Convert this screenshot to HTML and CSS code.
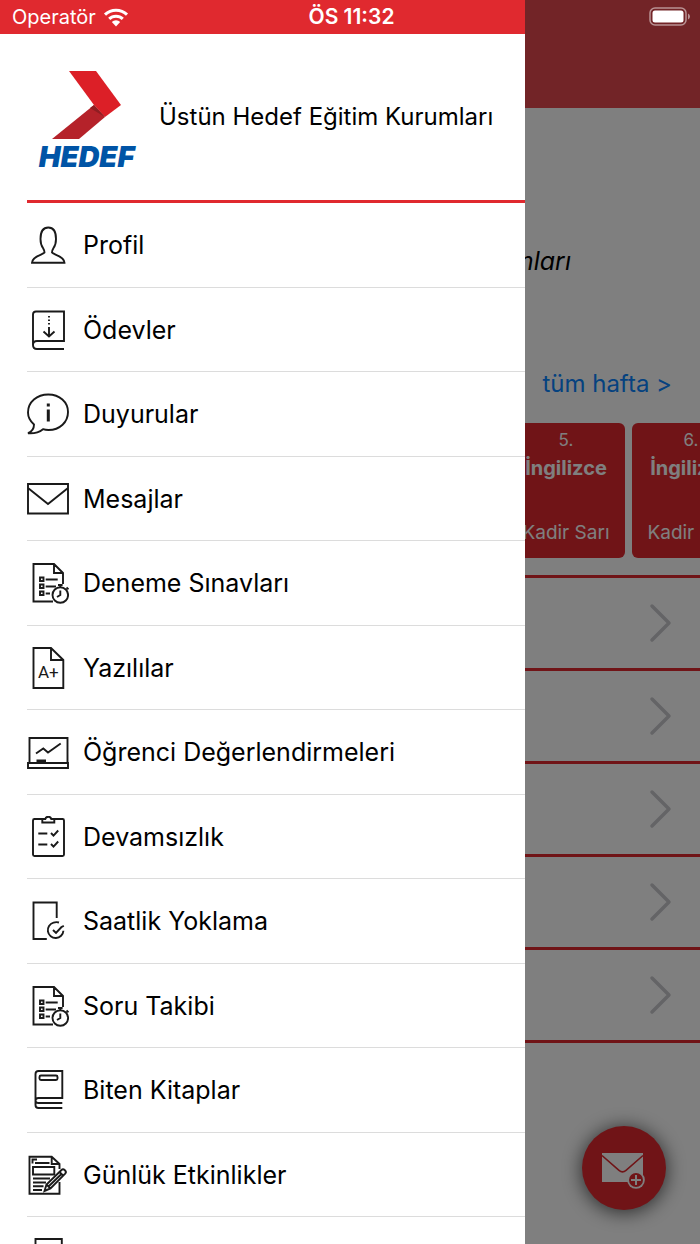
FILE: index.html
```
<!DOCTYPE html>
<html lang="tr">
<head>
    <meta charset="UTF-8">
    <meta name="viewport" content="width=device-width, initial-scale=1.0">
    <title>Üstün Hedef Eğitim Kurumları</title>
    <link rel="stylesheet" href="styles.css">
</head>
<body>
    <!-- Home screen behind the menu -->
    <main class="home">
        <div class="navbar"></div>
        <div class="school"><em>Üstün Hedef Eğitim Kurumları</em></div>
        <div class="week"><a href="#">tüm hafta &gt;</a></div>

        <ul class="lessons">
            <li class="lesson"></li>
            <li class="lesson"></li>
            <li class="lesson"></li>
            <li class="lesson"></li>
            <li class="lesson"><span>5.</span><strong>İngilizce</strong><span class="teacher">Kadir Sarı</span></li>
            <li class="lesson"><span>6.</span><strong>İngilizce</strong><span class="teacher">Kadir Sarı</span></li>
        </ul>

        <ul class="sections">
            <li><svg width="24" height="40" viewBox="0 0 24 40"><path d="M3 3l17 17L3 37"/></svg></li>
            <li><svg width="24" height="40" viewBox="0 0 24 40"><path d="M3 3l17 17L3 37"/></svg></li>
            <li><svg width="24" height="40" viewBox="0 0 24 40"><path d="M3 3l17 17L3 37"/></svg></li>
            <li><svg width="24" height="40" viewBox="0 0 24 40"><path d="M3 3l17 17L3 37"/></svg></li>
            <li><svg width="24" height="40" viewBox="0 0 24 40"><path d="M3 3l17 17L3 37"/></svg></li>
        </ul>

        <button class="fab" aria-label="Yeni mesaj">
            <svg width="44" height="38" viewBox="0 0 44 38">
                <path fill="#fff" d="M0 1h41v29H0z"/>
                <path fill="none" stroke="#e0292f" stroke-width="1.6" d="M0 3.500l17 14.800q3.500 3 7 0L41 3.500"/>
                <circle cx="34" cy="28" r="8.800" fill="#fff"/>
                <circle cx="34" cy="28" r="7" fill="#e0292f"/>
                <path stroke="#fff" stroke-width="2" d="M34 23v10M29 28h10"/>
            </svg>
        </button>
    </main>

    <div class="overlay"></div>

    <aside class="drawer">
        <header class="drawer-header">
            <div class="logo">
                <svg class="arrow" width="70" height="68" viewBox="0 0 70 68">
                    <path fill="#dc1f27" d="M17 0h27l25 34-16 12-11-12z"/>
                    <path fill="#b5222a" d="M42 34l11 12-26 22H0z"/>
                    <path fill="#8f1d22" d="M42 34l11 12-15-9z"/>
                </svg>
                <span class="logo-text">HEDEF</span>
            </div>
            <h1>Üstün Hedef Eğitim Kurumları</h1>
        </header>

        <nav class="menu">
            <a href="#">
                <svg viewBox="0 0 42 42"><path d="M17.500 28.500c0-2-.4-2.700-1.500-4.500-1.500-2-2.500-5-2.500-9 0-7 2.500-11.500 7.800-11.500S29 8 29 15c0 4-1 7-2.500 9-1.100 1.800-1.500 2.500-1.500 4.500 1 2 12.500 3.500 12.500 10.200H5c0-6.700 11.500-8.200 12.500-10.200z"/></svg>
                <span>Profil</span>
            </a>
            <a href="#">
                <svg viewBox="0 0 42 42"><path d="M6 36V5.500Q6 2.500 9 2.500h28V32H10q-4 0-4 4t4 4h27M22 18v9M16.500 22.500l5.500 5 5.500-5"/><path stroke-dasharray="1.500 2" d="M22 7v10"/></svg>
                <span>Ödevler</span>
            </a>
            <a href="#">
                <svg viewBox="0 0 42 42"><path d="M7 31.500C3 28 1 24 1 19.500 1 9 10 1.500 21.300 1.500S41 9 41 19 33 37 21.500 37c-2 0-4-.3-5.500-.8-3.500 2.800-9 4.500-15 4 3-1.200 6-4 6-8.700z"/><path stroke-width="3" d="M21.300 16.500v12M21.300 10.500v3"/></svg>
                <span>Duyurular</span>
            </a>
            <a href="#">
                <svg viewBox="0 0 42 42"><path d="M1 6h40v29.500H1zM1 10l20 16 20-16"/></svg>
                <span>Mesajlar</span>
            </a>
            <a href="#">
                <svg viewBox="0 0 42 42"><path d="M36 22V11l-9-9H6.500v37.500H26M27 2v9h9M18.700 17.500h12M18.700 24.500H29M18.700 31.500H23M13 15.500h3.500V19H13zM13 22.500h3.500V26H13zM13 29.500h3.500V33H13z"/><circle cx="33.300" cy="33" r="7.800"/><path d="M33.300 25v-2M31 23h4.600M39.500 25.500l2 1.800M33.300 28.500V33l-3.300 2"/></svg>
                <span>Deneme Sınavları</span>
            </a>
            <a href="#">
                <svg viewBox="0 0 42 42"><path d="M6.500 1H24l12.300 12V41H6.500zM24 1v12h12.300"/><text x="11" y="31" font-size="17">A+</text></svg>
                <span>Yazılılar</span>
            </a>
            <a href="#">
                <svg viewBox="0 0 42 42"><path d="M2.500 32V7h38v25M1 32h40v5H1zM9 22.500l7.300-5 4.700 4 12.700-9"/><path class="solid" d="M9.500 28.500h9.500V32H9.500z"/></svg>
                <span>Öğrenci Değerlendirmeleri</span>
            </a>
            <a href="#">
                <svg viewBox="0 0 42 42"><path d="M15 3H7.500Q6 3 6 4.500v34q0 1.500 1.500 1.500h28q1.500 0 1.500-1.500v-34Q37 3 35.500 3H27.500M15.300 3v3.500h12V3h-3q-.5-2.300-3-2.300T18.300 3zM11.300 17.500h9M11.300 28.500h9M24 17l2.500 2.700 4.700-5.200M24 28l2.500 2.700 4.700-5.200"/></svg>
                <span>Devamsızlık</span>
            </a>
            <a href="#">
                <svg viewBox="0 0 42 42"><path d="M29.700 18V2.500H6.500V39h13.300M32 22.500q-3-.8-5.500.2a7.800 7.800 0 1 0 9.900 8M35.500 25.500l1 1.500M26 30l3 3 6-6.500"/></svg>
                <span>Saatlik Yoklama</span>
            </a>
            <a href="#">
                <svg viewBox="0 0 42 42"><path d="M36 22V11l-9-9H6.500v37.500H26M27 2v9h9M18.700 17.500h12M18.700 24.500H29M18.700 31.500H23M13 15.500h3.500V19H13zM13 22.500h3.500V26H13zM13 29.500h3.500V33H13z"/><circle cx="33.300" cy="33" r="7.800"/><path d="M33.300 25v-2M31 23h4.600M39.500 25.500l2 1.800M33.300 28.500V33l-3.300 2"/></svg>
                <span>Soru Takibi</span>
            </a>
            <a href="#">
                <svg viewBox="0 0 42 42"><path d="M35.300 39H11.500q-3 0-3-3V5q0-3 3-3h23.800v27H11.500q-3 0-3 2.500T11.500 34h23.800"/><rect x="12.500" y="6.500" width="18" height="4.500" rx="1.500"/></svg>
                <span>Biten Kitaplar</span>
            </a>
            <a href="#">
                <svg viewBox="0 0 42 42"><path d="M32.500 15v-5l-7.800-7.300H2.500v37h30V28M24.700 2.700V10h7.800M5.500 9.500v-4H10M8 9h14.500M6 13h21.300v7.500H6zM6 24.500h17M6 28.500h13M6 32.300h10.500M6 36h9"/><path class="paper" d="M17.500 37l2-6.500L34.500 16q1.500-1.500 3.400.2t.3 3.500L23.500 34.500zM19.500 30.500l4 4M32.500 18l4 4M22 32l13-12.500"/></svg>
                <span>Günlük Etkinlikler</span>
            </a>
            <a href="#" aria-label="Kitap">
                <svg viewBox="0 0 42 42"><path d="M8.500 1h26.300v38H8.500z"/></svg>
            </a>
        </nav>
    </aside>

    <div class="statusbar">
        <span class="carrier">Operatör
            <svg width="26" height="19" viewBox="0 0 26 19">
                <path d="M2 6.700a15.800 15.800 0 0 1 22 0M6.200 10.900a9.800 9.800 0 0 1 13.600 0"/>
                <path class="dot" d="M8.800 14a6 6 0 0 1 8.400 0L13 18.500z"/>
            </svg>
        </span>
        <span class="time">ÖS 11:32</span>
        <svg class="battery" width="42" height="20" viewBox="0 0 42 20">
            <rect x="1" y="1" width="36" height="17" rx="5" fill="none" stroke="#fff" stroke-opacity=".5" stroke-width="1.500"/>
            <rect x="3.500" y="3.500" width="31" height="12" rx="2.500" fill="#fff"/>
            <path fill="#fff" fill-opacity=".5" d="M39 6.500q2 .8 2 3t-2 3z"/>
        </svg>
    </div>
</body>
</html>
```
FILE: styles.css
```
* {
    margin: 0;
    padding: 0;
    box-sizing: border-box;
}

body {
    font-family: Inter, "Liberation Sans", sans-serif;
    font-size: 25px;
    line-height: 30px;
    color: #000;
    background: #fff;
    height: 100vh;
    overflow: hidden;
}

ul {
    list-style: none;
}

a {
    color: inherit;
    text-decoration: none;
}

/* home screen */
.home {
    height: 100vh;
    overflow: hidden;
}

.navbar {
    height: 108px;
    background: #e4484f;
}

.school {
    padding: 138px 129px 0 0;
    text-align: right;
    white-space: nowrap;
}

.week {
    padding: 93px 28px 0 0;
    text-align: right;
    color: #0a84ff;
    font-size: 24px;
}

.lessons {
    display: flex;
    gap: 7px;
    padding: 24px 0 0 7px;
}

.lesson {
    flex: 0 0 118px;
    height: 135px;
    padding: 3px 0 11px;
    display: flex;
    flex-direction: column;
    align-items: center;
    border-radius: 6px;
    background: #e0292f;
    color: #fff;
    font-size: 17px;
    line-height: 28px;
    white-space: nowrap;
}

.lesson strong {
    font-size: 20px;
}

.teacher {
    margin-top: auto;
    font-size: 19px;
}

.sections {
    margin-top: 17px;
    border-top: 3px solid #e0292f;
}

.sections li {
    height: 93px;
    padding-right: 27px;
    display: flex;
    align-items: center;
    justify-content: flex-end;
    border-bottom: 3px solid #e0292f;
}

.sections path {
    fill: none;
    stroke: #c8c8cc;
    stroke-width: 3.5;
    stroke-linecap: round;
    stroke-linejoin: round;
}

.fab {
    position: fixed;
    right: 34px;
    bottom: 34px;
    width: 84px;
    height: 84px;
    padding-top: 8px;
    border: none;
    border-radius: 50%;
    background: #e0292f;
    box-shadow: 0 2px 20px rgba(0, 0, 0, 0.7);
}

.overlay {
    position: fixed;
    inset: 0;
    background: rgba(0, 0, 0, 0.5);
}

/* side menu */
.drawer {
    position: fixed;
    top: 0;
    left: 0;
    width: 75%;
    height: 100vh;
    padding: 34px 0 0 27px;
    background: #fff;
    overflow: hidden;
}

.drawer-header {
    height: 169px;
    padding-left: 9px;
    display: flex;
    align-items: center;
    gap: 22px;
    border-bottom: 3px solid #e0292f;
}

.drawer-header h1 {
    font-size: 24px;
    font-weight: 400;
    white-space: nowrap;
}

.logo {
    width: 101px;
    margin-top: 12px;
    display: flex;
    flex-direction: column;
    align-items: center;
}

.logo-text {
    font-size: 29px;
    line-height: 36px;
    font-weight: 900;
    font-style: italic;
    color: #0054a6;
}

.menu {
    display: grid;
    grid-auto-rows: 85px 84px;
}

.menu a {
    display: flex;
    align-items: center;
    gap: 14px;
    border-bottom: 1px solid #dcdcdc;
    white-space: nowrap;
}

.menu svg {
    flex: none;
    width: 42px;
    height: 42px;
    fill: none;
    stroke: #1a1a1a;
    stroke-width: 1.9;
}

.menu text,
.menu .solid {
    fill: #1a1a1a;
    stroke: none;
}

.menu text {
    font-family: Roboto, sans-serif;
}

.menu .paper {
    fill: #fff;
}

/* status bar */
.statusbar {
    position: fixed;
    top: 0;
    left: 0;
    right: 0;
    height: 34px;
    padding: 0 9px 0 12px;
    display: grid;
    grid-template-columns: 1fr auto 1fr;
    align-items: center;
    background: linear-gradient(#e0292f, #e0292f) left / 75% 100% no-repeat;
    color: #fff;
    font-size: 20px;
}

.carrier {
    display: flex;
    align-items: center;
    gap: 7px;
}

.carrier path {
    fill: none;
    stroke: #fff;
    stroke-width: 3;
}

.carrier .dot {
    fill: #fff;
    stroke: none;
}

.time {
    font-size: 21px;
    font-weight: 600;
}

.battery {
    justify-self: end;
}
```
